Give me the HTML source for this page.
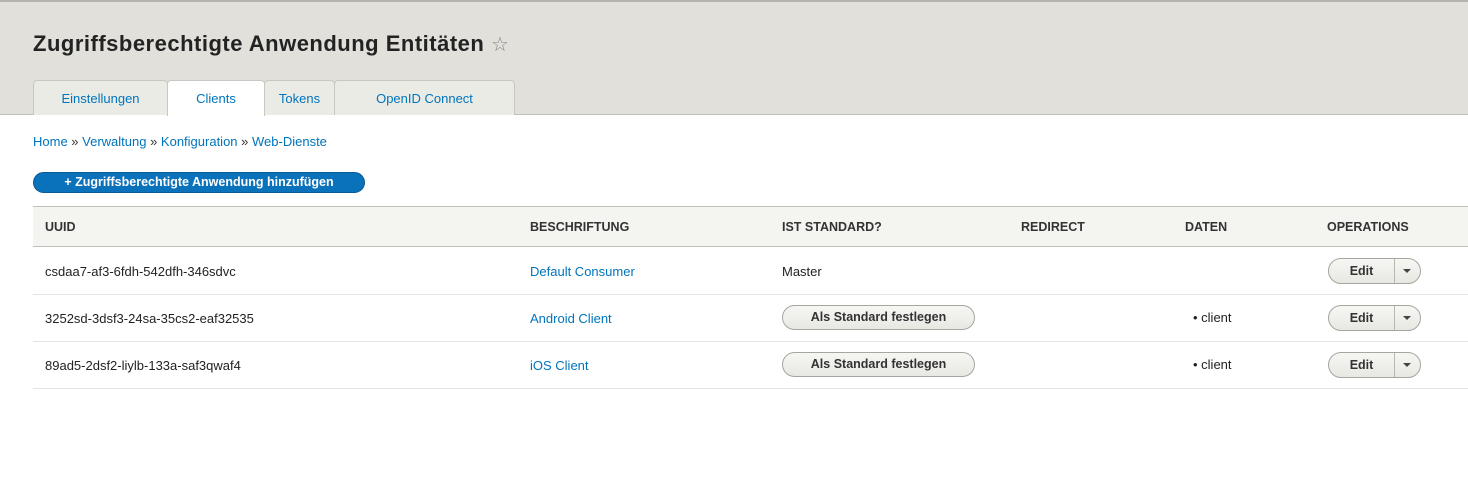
<!DOCTYPE html>
<html><head><meta charset="utf-8"><style>
*{margin:0;padding:0;box-sizing:border-box}
body{width:1468px;height:479px;background:#fff;font-family:"Liberation Sans",sans-serif;font-size:13px;color:#222;position:relative;overflow:hidden}
.a{position:absolute;white-space:nowrap}
.hdr{position:absolute;left:0;top:0;width:1468px;height:115px;background:#e1e0da;border-top:2px solid #b5b5b0;border-bottom:1px solid #bfbfba}
h1{position:absolute;left:33px;top:31px;font-size:22px;font-weight:bold;color:#232323;letter-spacing:0.5px;white-space:nowrap}
.tab{position:absolute;top:80px;height:35px;background:#ebebe6;border:1px solid #c8c8c2;border-bottom:none;border-radius:4px 4px 0 0;color:#0074bd;font-size:13px;text-align:center;line-height:35px}
.tab.on{background:#fff;height:36px;z-index:2}
a,.lk{color:#0074bd;text-decoration:none}
.add{position:absolute;left:33px;top:172px;width:332px;height:21px;background:#0a71bb;border:1px solid #0a5a94;border-radius:11px;color:#fff;font-weight:bold;font-size:12.5px;line-height:19px;text-align:center}
.th{position:absolute;left:33px;top:206px;width:1435px;height:41px;background:#f4f4f1;border-top:1px solid #bfbfba;border-bottom:1px solid #bfbfba}
.thx{position:absolute;top:220px;font-size:12.5px;font-weight:bold;color:#333;text-transform:uppercase}
.rl{position:absolute;left:33px;width:1435px;height:1px;background:#e6e4df}
.btn{position:absolute;left:782px;width:193px;height:25px;border:1px solid #a6a6a0;border-radius:13px;background:linear-gradient(#f6f6f3,#e8e8e3);font-weight:bold;font-size:12.5px;text-align:center;line-height:23px;color:#333}
.ed{position:absolute;left:1328px;width:93px;height:26px;border:1px solid #a6a6a0;border-radius:13px;background:linear-gradient(#f6f6f3,#e8e8e3);font-weight:bold;font-size:12.5px;color:#333}
.ed span{position:absolute;left:0;width:66px;text-align:center;line-height:24px;border-right:1px solid #b8b8b2;height:24px}
.ed i{position:absolute;left:74px;top:10px;width:0;height:0;border-left:4px solid transparent;border-right:4px solid transparent;border-top:4px solid #444}
</style></head><body>
<div class="hdr"></div>
<h1>Zugriffsberechtigte Anwendung Entitäten <span style="font-weight:normal;color:#888;font-size:20px">☆</span></h1>
<div class="tab" style="left:33px;width:135px">Einstellungen</div>
<div class="tab on" style="left:167px;width:98px">Clients</div>
<div class="tab" style="left:264px;width:71px">Tokens</div>
<div class="tab" style="left:334px;width:181px">OpenID Connect</div>
<div class="a lk" style="left:33px;top:134px">Home <span style="color:#333">»</span> Verwaltung <span style="color:#333">»</span> Konfiguration <span style="color:#333">»</span> Web-Dienste</div>
<div class="add">+ Zugriffsberechtigte Anwendung hinzufügen</div>
<div class="th"></div>
<div class="thx" style="left:45px">UUID</div>
<div class="thx" style="left:530px">Beschriftung</div>
<div class="thx" style="left:782px">Ist Standard?</div>
<div class="thx" style="left:1021px">Redirect</div>
<div class="thx" style="left:1185px">Daten</div>
<div class="thx" style="left:1327px">Operations</div>

<div class="a" style="left:45px;top:264px">csdaa7-af3-6fdh-542dfh-346sdvc</div>
<div class="a lk" style="left:530px;top:264px">Default Consumer</div>
<div class="a" style="left:782px;top:264px">Master</div>
<div class="ed" style="top:258px"><span>Edit</span><i></i></div>
<div class="rl" style="top:294px"></div>

<div class="a" style="left:45px;top:311px">3252sd-3dsf3-24sa-35cs2-eaf32535</div>
<div class="a lk" style="left:530px;top:311px">Android Client</div>
<div class="btn" style="top:305px">Als Standard festlegen</div>
<div class="a" style="left:1193px;top:310px">• client</div>
<div class="ed" style="top:305px"><span>Edit</span><i></i></div>
<div class="rl" style="top:341px"></div>

<div class="a" style="left:45px;top:358px">89ad5-2dsf2-liylb-133a-saf3qwaf4</div>
<div class="a lk" style="left:530px;top:358px">iOS Client</div>
<div class="btn" style="top:352px">Als Standard festlegen</div>
<div class="a" style="left:1193px;top:357px">• client</div>
<div class="ed" style="top:352px"><span>Edit</span><i></i></div>
<div class="rl" style="top:388px"></div>
</body></html>
